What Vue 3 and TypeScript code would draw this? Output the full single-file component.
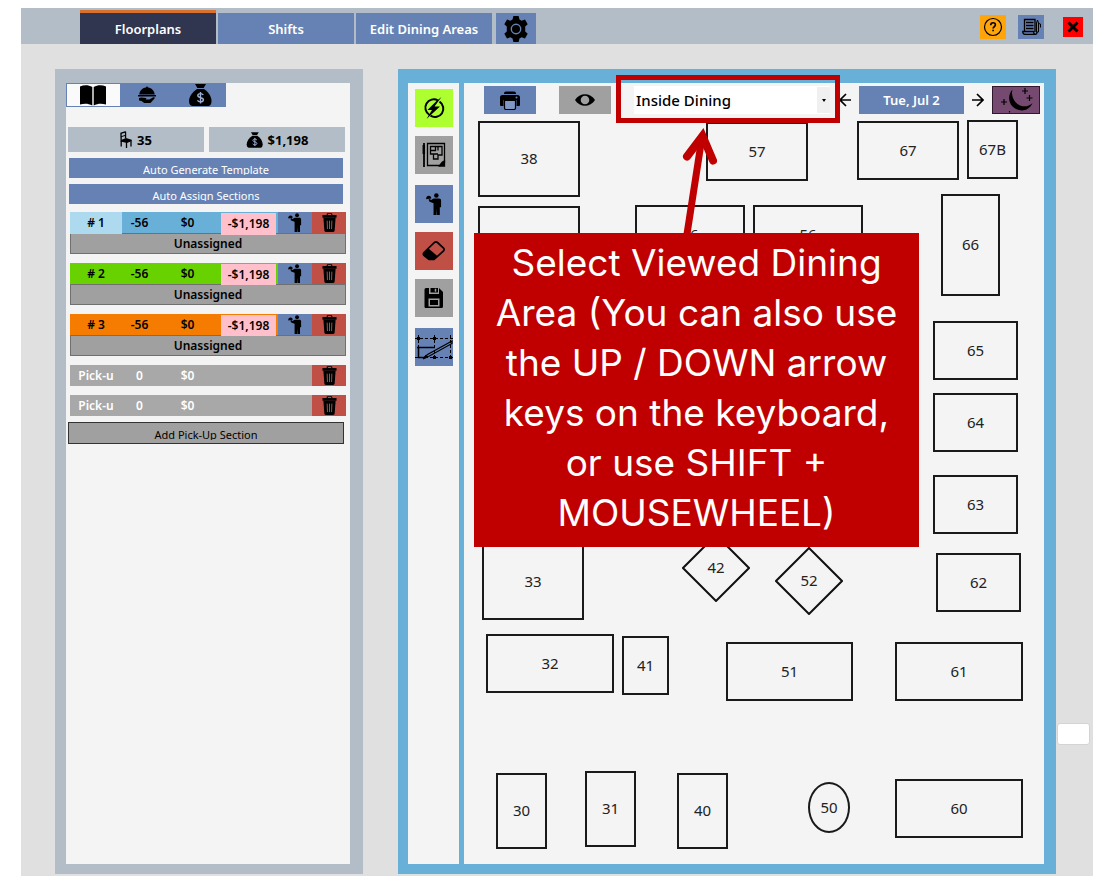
<script setup lang="ts">
import { ref } from 'vue'

interface Section {
  id: number
  label: string
  tone: string
}

interface DiningTable {
  label: string
  x: number
  y: number
  w: number
  h: number
  shape?: 'round' | 'diamond'
}

const area = ref('Inside Dining')

const sections: Section[] = [
  { id: 1, label: '# 1', tone: 'blue' },
  { id: 2, label: '# 2', tone: 'green' },
  { id: 3, label: '# 3', tone: 'orange' },
]

const pickups = [1, 2]

const tables: DiningTable[] = [
  { label: '38', x: 14, y: 2, w: 102, h: 76 },
  { label: '', x: 14, y: 87, w: 102, h: 76 },
  { label: '57', x: 242, y: 3, w: 102, h: 59 },
  { label: '67', x: 393, y: 2, w: 102, h: 59 },
  { label: '67B', x: 503, y: 1, w: 51, h: 59 },
  { label: '66', x: 477, y: 75, w: 59, h: 102 },
  { label: '46', x: 171, y: 86, w: 110, h: 59 },
  { label: '56', x: 289, y: 86, w: 110, h: 59 },
  { label: '65', x: 469, y: 202, w: 85, h: 59 },
  { label: '64', x: 469, y: 274, w: 85, h: 59 },
  { label: '63', x: 469, y: 356, w: 85, h: 59 },
  { label: '62', x: 472, y: 434, w: 85, h: 59 },
  { label: '33', x: 18, y: 425, w: 102, h: 76 },
  { label: '42', x: 218, y: 415, w: 68, h: 68, shape: 'diamond' },
  { label: '52', x: 311, y: 428, w: 68, h: 68, shape: 'diamond' },
  { label: '32', x: 22, y: 515, w: 128, h: 59 },
  { label: '41', x: 158, y: 517, w: 47, h: 59 },
  { label: '51', x: 262, y: 523, w: 127, h: 59 },
  { label: '61', x: 431, y: 523, w: 128, h: 59 },
  { label: '30', x: 32, y: 654, w: 51, h: 76 },
  { label: '31', x: 121, y: 652, w: 51, h: 76 },
  { label: '40', x: 213, y: 654, w: 51, h: 76 },
  { label: '50', x: 344, y: 663, w: 42, h: 51, shape: 'round' },
  { label: '60', x: 431, y: 660, w: 128, h: 59 },
]

const place = (t: DiningTable) => ({
  left: `${t.x}px`,
  top: `${t.y}px`,
  width: `${t.w}px`,
  height: `${t.h}px`,
})
</script>

<template>
  <svg class="sprite" aria-hidden="true">
    <symbol id="bag" viewBox="0 0 24 22">
      <path d="M7 0h11l-2.400 4H9.400z" />
      <path d="M9 5h7c4.500 3 7.500 7.500 7.500 12 0 3-1 4.500-3 5h-16c-2.500-.5-3.500-2-3.500-5C1 12.500 4.500 8 9 5z" />
      <path class="cut" d="M15.300 11c-.6-1-1.600-1.400-2.800-1.400-1.600 0-2.700.8-2.700 2 0 2.800 5.600 1.400 5.600 4.200 0 1.300-1.200 2.100-2.900 2.100-1.400 0-2.500-.5-3-1.600M12.500 8v11.500" />
    </symbol>
    <symbol id="server" viewBox="0 0 20 28">
      <circle cx="13" cy="3.200" r="2.900" />
      <path d="M9.500 7h7c1.700 0 2.500 1 2.500 2.500V18h-1.600v10h-3.600l-.3-8-.3 8H9.400V13l-4.200-1.500c-1-.4-1.300-1-1.500-2L3 8.500l1.500-1L6.300 9z" />
      <path d="M0 8C-.2 5 1.500 3.800 3.200 3.600 5 3.400 6.500 4.600 6.600 7z" />
    </symbol>
    <symbol id="trash" viewBox="0 0 16 20">
      <path d="M5 2V.8C5 .3 5.400 0 6 0h4c.6 0 1 .3 1 .8V2h4.500v2.800H.5V2zM6.200 2h3.600V1H6.200z" fill-rule="evenodd" />
      <path d="M1.500 4.800h13L13.500 18.500c-.1 1-.7 1.500-1.600 1.500H4.100c-.9 0-1.500-.5-1.600-1.500z" />
      <path class="trash-cut" d="M5.500 8l.3 9M8 8v9M10.500 8l-.3 9" />
    </symbol>
  </svg>

  <div class="page">
    <div class="app">
      <header class="topbar">
        <nav class="tabs">
          <button type="button" class="tab active">Floorplans</button>
          <button type="button" class="tab">Shifts</button>
          <button type="button" class="tab">Edit Dining Areas</button>
          <button type="button" class="tab gear" aria-label="Settings">
            <svg viewBox="0 0 24 24" width="26" height="26">
              <path fill-rule="evenodd" d="M9.600 0h4.800l.8 3.200 2 1.100 3.100-1 2.500 4.300-2.300 2.200v4.400l2.300 2.200-2.500 4.300-3.100-1-2 1.100-.8 3.200H9.600l-.8-3.200-2-1.100-3.100 1-2.500-4.300 2.300-2.200V9.800L1.200 7.600l2.500-4.300 3.100 1 2-1.100zM12 7a5 5 0 100 10 5 5 0 000-10zm0 1.300a3.700 3.700 0 110 7.400 3.700 3.700 0 010-7.400z" />
            </svg>
          </button>
        </nav>
        <div class="window-tools">
          <button type="button" class="tool help" aria-label="Help">
            <svg viewBox="0 0 20 20" width="20" height="20" fill="none" stroke="#000">
              <circle cx="10" cy="10" r="8.500" stroke-width="1.200" />
              <path d="M7.700 8.200c0-3.300 4.700-3.200 4.700-.4 0 1.700-2.300 1.800-2.300 3.800" stroke-width="1.600" />
              <path d="M9.300 13.500h1.600" stroke-width="1.600" />
            </svg>
          </button>
          <button type="button" class="tool notes" aria-label="Notes">
            <svg viewBox="0 0 20 20" width="20" height="20" fill="none" stroke="#000" stroke-width="1.300">
              <path d="M14 15V2.500H3.500v12H1.800c0 2 .8 2.800 2 2.800h10.400c1.300 0 1.800-.8 1.800-2.300M3.500 14.500h9c0 1.700.5 2.500 1.700 2.800" />
              <path d="M5 5.500h7.500M5 8.500h7.500M5 11.500h7.500" stroke-width="1.400" />
              <path d="M15.500 15V6l1-3 1 3v9zM17.500 6.500l2 .5v3.500" stroke-width="1" />
            </svg>
          </button>
          <button type="button" class="tool close" aria-label="Close">
            <svg viewBox="0 0 12 12" width="12" height="12">
              <path d="M1.500 1.500l9 9M10.500 1.500l-9 9" stroke="#000" stroke-width="3" />
            </svg>
          </button>
        </div>
      </header>

      <main class="workspace">
        <aside class="sidebar">
          <div class="side-tabs">
            <button type="button" class="side-tab selected" aria-label="Templates">
              <svg viewBox="0 0 26 21" width="26" height="21">
                <path d="M0 1.500C4-.3 8.500-.2 12.300 2v18.500C8.500 18.300 4 18.300 0 19.500zM26 1.500C22-.3 17.500-.2 13.700 2v18.500C17.500 18.300 22 18.300 26 19.500z" />
              </svg>
            </button>
            <button type="button" class="side-tab" aria-label="Service">
              <svg viewBox="0 0 18 18" width="18" height="18">
                <path d="M8 1.500a1 1 0 112 0C14 2 16.500 5 16.700 8.500H1.300C1.500 5 4 2 8 1.500zM0 9h18v1.400H0z" />
                <path d="M1 12l2.500-.6 4 .6c1.300.2 1.200 1.200 0 1.400l3.800.1 4-2.200c1.500-.6 2 .5 1 1.400L12.500 17H6.200L3.500 15 1 14.600z" />
              </svg>
            </button>
            <button type="button" class="side-tab" aria-label="Sales">
              <svg width="24" height="22"><use href="#bag" /></svg>
            </button>
          </div>

          <div class="stats">
            <div class="stat">
              <svg viewBox="0 0 12 17" width="12" height="17">
                <path d="M.3 1.800L5 .2c.8-.2 1.200.1 1.200.8v6l-1.300.5V5L1.800 6v3L.5 9.500zM1.700 2.700V5l3.200-1V1.700z" fill-rule="evenodd" />
                <path d="M.5 9.300L6 7l5.700 1.800V10L7 12 .5 10.500z" />
                <path d="M1.200 10v5.500M6.500 11v6M11 9.500v6M4.800 8v1" fill="none" stroke="#000" stroke-width="1.300" />
              </svg>
              <span>35</span>
            </div>
            <div class="stat">
              <svg width="17" height="16"><use href="#bag" /></svg>
              <span>$1,198</span>
            </div>
          </div>

          <div class="auto-actions">
            <button type="button" class="action"><span>Auto Generate Template</span></button>
            <button type="button" class="action"><span>Auto Assign Sections</span></button>
          </div>

          <div class="sections">
            <section v-for="s in sections" :key="s.id" class="section">
              <div class="row" :class="s.tone">
                <span class="name">{{ s.label }}</span>
                <span>-56</span>
                <span>$0</span>
                <span class="short">-$1,198</span>
                <button type="button" class="cell assign" aria-label="Assign server">
                  <svg width="14" height="19"><use href="#server" /></svg>
                </button>
                <button type="button" class="cell remove" aria-label="Delete section">
                  <svg width="15" height="19"><use href="#trash" /></svg>
                </button>
              </div>
              <button type="button" class="assignee">Unassigned</button>
            </section>
            <div v-for="p in pickups" :key="p" class="row pickup">
              <span class="name">Pick-u</span>
              <span>0</span>
              <span>$0</span>
              <button type="button" class="cell remove" aria-label="Delete pick-up section">
                <svg width="15" height="19"><use href="#trash" /></svg>
              </button>
            </div>
          </div>
          <button type="button" class="add"><span>Add Pick-Up Section</span></button>
        </aside>

        <div class="board">
          <div class="strip">
            <div class="strip-group">
              <button type="button" class="strip-btn lime" aria-label="Auto assign">
                <svg viewBox="0 0 22 22" width="22" height="22">
                  <path d="M6.500 18A8.300 8.300 0 0115 3.500M16.500 4.700A8.300 8.300 0 017.500 18.700" fill="none" stroke="#000" stroke-width="2" />
                  <path d="M18.500 0l-7 9.500h5.500L3.500 22l5.500-9H4.500L13 4.500z" />
                </svg>
              </button>
              <button type="button" class="strip-btn gray" aria-label="Floorplan templates">
                <svg viewBox="0 0 24 26" width="24" height="26" fill="none" stroke="#000" stroke-width="1.300">
                  <path d="M5.500 1.500h17v19l-4 3h-13z" />
                  <path d="M8.500 4.500h11.500v8.500h-4v4h-4.500v-5h-3zM8.500 8.500h5V4.500M16 4.500v4M11.500 12h4.500" />
                  <path d="M16.500 24c2.500-.5 2-4 6-5v5z" fill="#000" />
                  <path d="M2 1v24" stroke-width="1.800" /><path d="M1.800 3v9" stroke-width="2.500" />
                </svg>
              </button>
            </div>
            <div class="strip-group">
              <button type="button" class="strip-btn steel" aria-label="Assign servers">
                <svg width="16" height="22"><use href="#server" /></svg>
              </button>
              <button type="button" class="strip-btn red" aria-label="Erase">
                <svg viewBox="0 0 24 22" width="24" height="22">
                  <path d="M2 12.500L12.500 2.500q1.500-1.200 3 0L21.500 8q1.300 1.500 0 3L12 19.500H7L2 15.500q-1.300-1.500 0-3z" fill="none" stroke="#000" stroke-width="1.700" />
                  <path d="M6.500 8.500l9.500 8-4 3.500H7L1.500 15.500v-3z" />
                </svg>
              </button>
              <button type="button" class="strip-btn gray" aria-label="Save">
                <svg viewBox="0 0 20 22" width="20" height="22">
                  <path fill-rule="evenodd" d="M2 1h3v6h10V1l4 4v14.500q0 1.500-1.500 1.500h-16Q.5 21 .5 19.500v-17Q.5 1 2 1zM4.500 11.500v8h11v-8zM6 13h8v5H6z" />
                  <path d="M6.500 1H14v4.500H6.500zM7 14.800h6v1.200H7z" />
                  <path d="M11.500 1.700v3" stroke="#a0a0a0" stroke-width="1.500" />
                </svg>
              </button>
            </div>
            <div class="strip-group">
              <button type="button" class="strip-btn steel" aria-label="Draw section lines">
                <svg viewBox="0 0 38 38" width="38" height="38" fill="none" stroke="#000">
                  <path d="M0 10.500h38M0 29.500h38M3.500 7v24M19.500 7v24M35.500 7v24" stroke-dasharray="3 2" />
                  <path d="M2 9h3v3H2zM18 9h3v3h-3zM34 28h3v3h-3zM18 28h3v3h-3z" fill="#000" stroke="none" />
                  <path d="M2 19.500h18M3.500 19.500v10h6" stroke-width="1.500" />
                  <path d="M9 30l3.500-3.500L37 13v2.500L13.500 28.500z" stroke-width="1.200" />
                  <path d="M8 31l3-4 2 2z" fill="#000" />
                </svg>
              </button>
            </div>
          </div>

          <div class="canvas">
            <div class="toolbar">
              <button type="button" class="bar-btn steel" aria-label="Print">
                <svg viewBox="0 0 20 19" width="20" height="19">
                  <path d="M4 2.500Q4 .5 6 .5h8q2 0 2 2v.5H4zM2.500 4h15Q20 4 20 6.500V14q0 1-1 1h-2.500V9h-13v6H1q-1 0-1-1V6.500Q0 4 2.500 4z" />
                  <path d="M4.500 9.500h11V17q0 1.500-1.500 1.500H6q-1.500 0-1.500-1.500z" fill="#8098c6" stroke="#000" stroke-width="1.200" />
                  <circle cx="16.500" cy="6.500" r="1" fill="#6682b4" />
                </svg>
              </button>
              <button type="button" class="bar-btn gray" aria-label="Toggle view">
                <svg viewBox="0 0 20 12" width="20" height="12">
                  <path fill-rule="evenodd" d="M0 6C4.500-1.700 15.500-1.700 20 6 15.500 13.700 4.500 13.700 0 6zm10-4.300a4.300 4.300 0 100 8.600 4.300 4.300 0 000-8.600z" />
                </svg>
              </button>
              <div class="combo">
                <select v-model="area" aria-label="Dining area">
                  <option>Inside Dining</option>
                </select>
                <span class="caret" aria-hidden="true"></span>
              </div>
              <div class="dates">
                <button type="button" class="arrow" aria-label="Previous day">
                  <svg viewBox="0 0 12 14" width="12" height="14"><path d="M12 7H1.500M7 1L1 7l6 6" /></svg>
                </button>
                <button type="button" class="date">Tue, Jul 2</button>
                <button type="button" class="arrow" aria-label="Next day">
                  <svg viewBox="0 0 12 14" width="12" height="14"><path d="M0 7h10.500M5 1l6 6-6 6" /></svg>
                </button>
                <button type="button" class="night" aria-label="Dinner shift">
                  <svg viewBox="0 0 46 26" width="46" height="26">
                    <path d="M19.500 2.500C15 7 15 15 19.500 19.500c6 6 16.500 5.300 20-3.500-4 4-10.500 4.500-15 1C20 13.500 18 7.500 19.500 2.500z" />
                    <path d="M32 1v6M29 4h6M36.500 8v6M33.500 11h6M11 12v6M8 15h6M16.500 24v1.500" stroke="#000" stroke-width="1.200" />
                  </svg>
                </button>
              </div>
            </div>

            <div class="floor">
              <div v-for="(t, i) in tables" :key="i" class="table" :class="t.shape" :style="place(t)">
                <svg v-if="t.shape === 'diamond'" viewBox="0 0 68 68" class="outline">
                  <path d="M34 1l33 33-33 33L1 34z" />
                </svg>
                <span>{{ t.label }}</span>
              </div>

              <svg class="pointer" viewBox="0 0 40 116" width="40" height="116">
                <path d="M10 112L25 15" stroke-width="7" />
                <path d="M10 34.500L25.500 14 36 38.500" stroke-width="8" stroke-linecap="round" />
              </svg>
              <div class="callout">
                Select Viewed Dining<br />Area (You can also use<br />the UP / DOWN arrow<br />keys on the keyboard,<br />or use SHIFT +<br />MOUSEWHEEL)
              </div>
            </div>
          </div>
        </div>
        <div class="handle"></div>
      </main>
    </div>
  </div>
</template>

<style>
body {
  background: #fff;
}
</style>

<style scoped>
.page,
.page * {
  box-sizing: border-box;
}

.page {
  display: flex;
  min-height: 100vh;
  padding: 8px 21px 7px;
  font-family: "Noto Sans", "Open Sans", sans-serif;
  font-size: 13px;
  color: #000;
}

.sprite {
  position: absolute;
  width: 0;
  height: 0;
}

svg {
  display: block;
  flex: none;
}

button {
  display: flex;
  align-items: center;
  justify-content: center;
  margin: 0;
  padding: 0;
  border: 0;
  border-radius: 0;
  font: inherit;
  color: inherit;
  cursor: pointer;
}

.app {
  display: flex;
  flex: 1;
  flex-direction: column;
  background: #e0e0e0;
}

.topbar {
  display: flex;
  align-items: flex-end;
  justify-content: space-between;
  height: 36px;
  padding: 0 10px 0 59px;
  background: #b2bdc8;
}

.tabs {
  display: flex;
  align-items: flex-end;
  gap: 2px;
}

.tab {
  width: 136px;
  height: 31px;
  background: #6682b4;
  color: #fff;
  font-weight: 600;
}

.tab.active {
  height: 34px;
  border-top: 3px solid #d9722f;
  background: #30364f;
}

.tab.gear {
  width: 40px;
  margin-left: 2px;
}

.window-tools {
  display: flex;
  align-items: center;
  align-self: center;
  gap: 12px;
  padding-top: 2px;
}

.tool {
  width: 26px;
  height: 24px;
}

.help {
  background: #ffa50a;
}

.notes,
.steel {
  background: #6682b4;
}

.close {
  width: 20px;
  height: 20px;
  margin-left: 7px;
  background: #f00;
}

.workspace {
  position: relative;
  display: flex;
  flex: 1;
  gap: 35px;
  padding: 25px 37px 2px 34px;
}

.sidebar {
  flex: none;
  width: 308px;
  border: solid #b2bdc8;
  border-width: 14px 13px 10px 11px;
  background: #f4f4f4;
}

.side-tabs {
  display: flex;
  width: 160px;
  height: 24px;
  background: #6682b4;
}

.side-tab {
  flex: 1;
  background: none;
}

.side-tab.selected {
  border: 1px solid #6682b4;
  background: #fafafa;
}

.cut {
  fill: none;
  stroke: #9db0d4;
  stroke-width: 1.4;
}

.trash-cut {
  fill: none;
  stroke: #c04f45;
  stroke-width: 1;
}

.stats {
  display: flex;
  gap: 5px;
  margin: 20px 5px 6px 2px;
}

.stat {
  display: flex;
  flex: 1;
  align-items: center;
  justify-content: center;
  gap: 5px;
  height: 25px;
  background: #b2bdc8;
  font-weight: 700;
}

.auto-actions {
  display: flex;
  flex-direction: column;
  gap: 6px;
  margin: 0 7px 8px 3px;
}

.action {
  align-items: flex-start;
  height: 20px;
  padding-top: 4px;
  background: #6682b4;
  color: #fff;
  font-size: 11px;
}

.action span,
.add span {
  height: 13px;
  line-height: 16px;
  overflow: hidden;
}

.sections {
  display: flex;
  flex-direction: column;
  gap: 9px;
  margin: 0 4px;
}

.row {
  display: grid;
  grid-template-columns: 52px 35px 61px 60px 34px 34px;
  height: 21px;
  font-weight: 600;
  font-size: 12px;
  line-height: 22px;
  text-align: center;
}

.row.blue {
  background: #68b0d8;
}

.row.blue .name {
  margin-bottom: 1px;
  background: #addaef;
}

.row.green {
  background: #68d200;
}

.row.orange {
  background: #f57c00;
}

.short {
  margin: 1px 2px 0 3px;
  background: #ffc0cb;
  line-height: 21px;
}

.cell {
  height: 21px;
}

.assign {
  background: #6682b4;
}

.remove {
  grid-column: 6;
  background: #c04f45;
}

.row.pickup {
  background: #a8a8a8;
  color: #fff;
}

.assignee {
  width: 100%;
  height: 21px;
  border: 1px solid #707070;
  background: #a0a0a0;
  font-weight: 600;
  font-size: 12px;
}

.add {
  align-items: flex-start;
  width: 276px;
  height: 22px;
  margin: 6px 0 0 2px;
  padding-top: 4px;
  border: 1px solid #333;
  background: #a0a0a0;
  font-size: 11px;
}

.board {
  display: flex;
  flex: 1;
  gap: 5px;
  border: solid #68b0d8;
  border-width: 14px 12px 10px 10px;
  background: #68b0d8;
}

.strip {
  display: flex;
  flex: none;
  flex-direction: column;
  align-items: center;
  gap: 11px;
  width: 51px;
  padding-top: 6px;
  background: #f4f4f4;
}

.strip-group {
  display: flex;
  flex-direction: column;
  gap: 9px;
}

.strip-btn {
  width: 38px;
  height: 38px;
}

.lime {
  background: #adff2f;
}

.gray {
  background: #a0a0a0;
}

.red {
  background: #c04f45;
}

.canvas {
  display: flex;
  flex: 1;
  flex-direction: column;
  background: #f4f4f4;
}

.toolbar {
  position: relative;
  z-index: 1;
  display: flex;
  align-items: center;
  height: 36px;
  padding: 0 4px 2px 20px;
}

.bar-btn {
  width: 52px;
  height: 28px;
  margin-right: 23px;
}

.combo {
  position: relative;
  flex: 1;
  height: 28px;
}

.combo::after {
  position: absolute;
  inset: -11px -10px -9px -18px;
  border: 5px solid #c00000;
  content: "";
  pointer-events: none;
}

.combo select {
  width: 100%;
  height: 28px;
  padding: 0 16px 0 2px;
  border: 0;
  border-radius: 0;
  appearance: none;
  background: #fff;
  color: #000;
  font: inherit;
  font-weight: 500;
  font-size: 15px;
}

.caret {
  position: absolute;
  top: 1px;
  right: 0;
  display: grid;
  place-items: center;
  width: 13px;
  height: 26px;
  background: #f0f0f0;
  pointer-events: none;
}

.caret::before {
  border: solid transparent;
  border-width: 3px 2px 0;
  border-top-color: #000;
  content: "";
}

.dates {
  display: flex;
  align-items: center;
  gap: 8px;
  margin-left: 9px;
}

.arrow {
  background: none;
}

.arrow path {
  fill: none;
  stroke: #000;
  stroke-width: 1.700;
}

.date {
  width: 105px;
  height: 28px;
  background: #6682b4;
  color: #fff;
  font-weight: 600;
}

.night {
  width: 48px;
  height: 28px;
  border: 1px solid #30182c;
  background: #764a70;
}

.floor {
  position: relative;
  flex: 1;
  min-height: 740px;
}

.table {
  position: absolute;
  display: flex;
  align-items: center;
  justify-content: center;
  padding-bottom: 2px;
  border: 2px solid #1a1a1a;
  color: #222;
  font-size: 15px;
}

.table.round {
  border-radius: 50%;
}

.table.diamond {
  border: 0;
}

.outline {
  position: absolute;
  inset: 0;
  fill: none;
  stroke: #111;
  stroke-width: 2;
}

.pointer {
  position: absolute;
  top: 3px;
  left: 213px;
  fill: none;
  stroke: #c00000;
}

.callout {
  position: absolute;
  top: 114px;
  left: 10px;
  width: 445px;
  height: 314px;
  padding-top: 5px;
  background: #c00000;
  color: #fff;
  font-family: Inter, "Open Sans", sans-serif;
  font-size: 37px;
  line-height: 50px;
  text-align: center;
  white-space: nowrap;
}

.handle {
  position: absolute;
  right: 3px;
  bottom: 131px;
  width: 33px;
  height: 22px;
  border: 1px solid #d4d4d4;
  border-radius: 3px;
  background: #fff;
}
</style>
